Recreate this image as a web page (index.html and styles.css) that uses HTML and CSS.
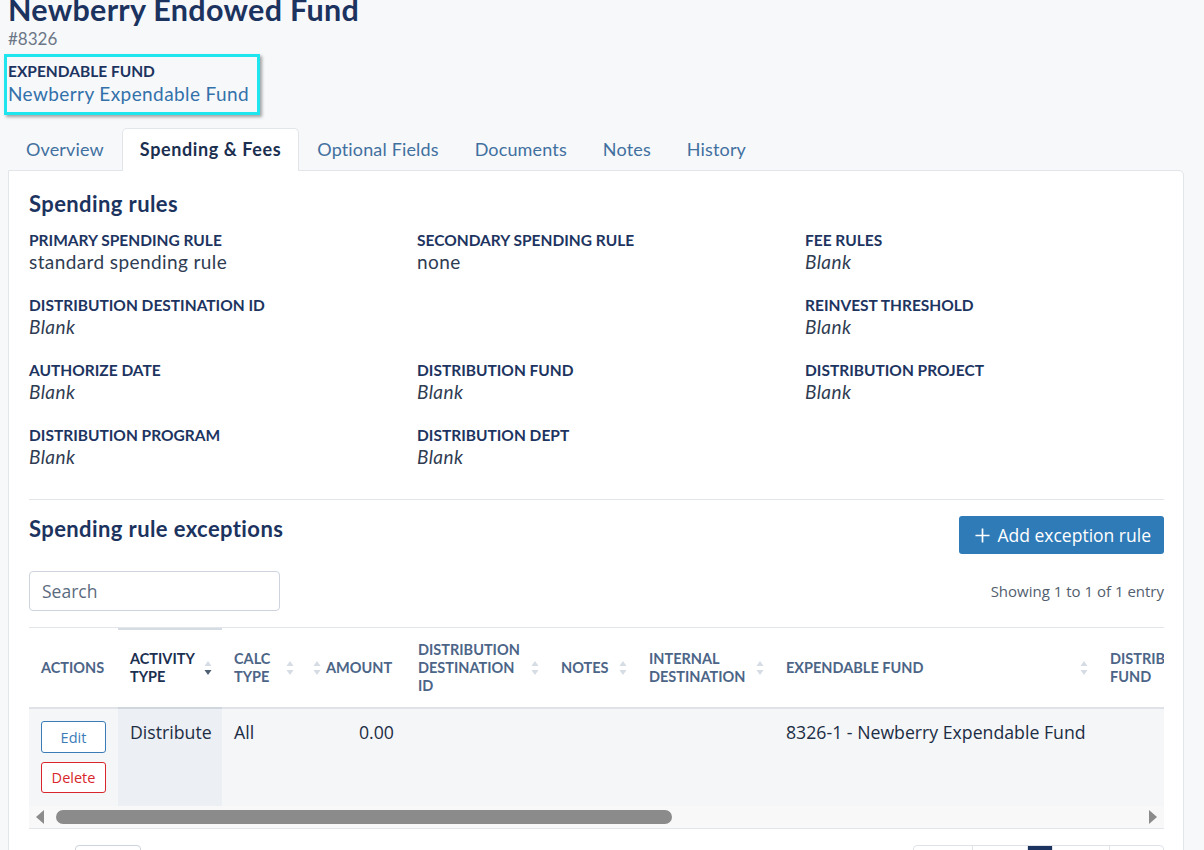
FILE: index.html
```html
<!DOCTYPE html>
<html lang="en">
<head>
<meta charset="utf-8">
<title>Newberry Endowed Fund</title>
<link rel="stylesheet" href="styles.css">
</head>
<body>
<div class="page">
  <header class="fund-head">
    <h1 class="fund-title">Newberry Endowed Fund</h1>
    <div class="fund-number">#8326</div>
    <div class="linked-fund">
      <div class="linked-label">EXPENDABLE FUND</div>
      <a class="linked-link" href="#">Newberry Expendable Fund</a>
    </div>
  </header>

  <nav class="tabs">
    <a class="tab" href="#">Overview</a>
    <a class="tab tab-active" href="#">Spending &amp; Fees</a>
    <a class="tab" href="#">Optional Fields</a>
    <a class="tab" href="#">Documents</a>
    <a class="tab" href="#">Notes</a>
    <a class="tab" href="#">History</a>
  </nav>

  <section class="card">
    <h2 class="section-title">Spending rules</h2>
    <div class="field-grid">
      <div class="field"><div class="field-label">PRIMARY SPENDING RULE</div><div class="field-value">standard spending rule</div></div>
      <div class="field"><div class="field-label">SECONDARY SPENDING RULE</div><div class="field-value">none</div></div>
      <div class="field"><div class="field-label">FEE RULES</div><div class="field-value blank">Blank</div></div>

      <div class="field"><div class="field-label">DISTRIBUTION DESTINATION ID</div><div class="field-value blank">Blank</div></div>
      <div class="field"></div>
      <div class="field"><div class="field-label">REINVEST THRESHOLD</div><div class="field-value blank">Blank</div></div>

      <div class="field"><div class="field-label">AUTHORIZE DATE</div><div class="field-value blank">Blank</div></div>
      <div class="field"><div class="field-label">DISTRIBUTION FUND</div><div class="field-value blank">Blank</div></div>
      <div class="field"><div class="field-label">DISTRIBUTION PROJECT</div><div class="field-value blank">Blank</div></div>

      <div class="field"><div class="field-label">DISTRIBUTION PROGRAM</div><div class="field-value blank">Blank</div></div>
      <div class="field"><div class="field-label">DISTRIBUTION DEPT</div><div class="field-value blank">Blank</div></div>
      <div class="field"></div>
    </div>

    <hr class="divider">

    <div class="exceptions-head">
      <h2 class="section-title">Spending rule exceptions</h2>
      <button class="btn-primary" type="button"><svg class="plus" viewBox="0 0 16 16"><path d="M8 0.5 V15.5 M0.5 8 H15.5"/></svg>Add exception rule</button>
    </div>

    <div class="table-tools">
      <input class="search" type="text" placeholder="Search">
      <div class="info">Showing 1 to 1 of 1 entry</div>
    </div>

    <div class="table-frame">
      <div class="table-clip">
        <table class="grid">
          <colgroup>
            <col class="w-actions"><col class="w-activity"><col class="w-calc"><col class="w-amount">
            <col class="w-dest"><col class="w-notes"><col class="w-internal"><col class="w-expfund">
            <col class="w-distfund"><col class="w-extra"><col class="w-extra">
          </colgroup>
          <thead>
            <tr>
              <th class="plain">ACTIONS</th>
              <th class="sorted"><div class="th-in"><span>ACTIVITY<br>TYPE</span><svg class="sort" viewBox="0 0 8 16"><path class="up" d="M4 1 L7.5 6 H0.5 Z"/><path class="down on" d="M4 15 L7.5 10 H0.5 Z"/></svg></div></th>
              <th><div class="th-in"><span>CALC<br>TYPE</span><svg class="sort" viewBox="0 0 8 16"><path class="up" d="M4 1 L7.5 6 H0.5 Z"/><path class="down" d="M4 15 L7.5 10 H0.5 Z"/></svg></div></th>
              <th class="num"><div class="th-in"><svg class="sort" viewBox="0 0 8 16"><path class="up" d="M4 1 L7.5 6 H0.5 Z"/><path class="down" d="M4 15 L7.5 10 H0.5 Z"/></svg><span>AMOUNT</span></div></th>
              <th><div class="th-in"><span>DISTRIBUTION<br>DESTINATION<br>ID</span><svg class="sort" viewBox="0 0 8 16"><path class="up" d="M4 1 L7.5 6 H0.5 Z"/><path class="down" d="M4 15 L7.5 10 H0.5 Z"/></svg></div></th>
              <th><div class="th-in"><span>NOTES</span><svg class="sort" viewBox="0 0 8 16"><path class="up" d="M4 1 L7.5 6 H0.5 Z"/><path class="down" d="M4 15 L7.5 10 H0.5 Z"/></svg></div></th>
              <th><div class="th-in"><span>INTERNAL<br>DESTINATION</span><svg class="sort" viewBox="0 0 8 16"><path class="up" d="M4 1 L7.5 6 H0.5 Z"/><path class="down" d="M4 15 L7.5 10 H0.5 Z"/></svg></div></th>
              <th><div class="th-in"><span>EXPENDABLE FUND</span><svg class="sort" viewBox="0 0 8 16"><path class="up" d="M4 1 L7.5 6 H0.5 Z"/><path class="down" d="M4 15 L7.5 10 H0.5 Z"/></svg></div></th>
              <th><div class="th-in"><span>DISTRIBUTION<br>FUND</span><svg class="sort" viewBox="0 0 8 16"><path class="up" d="M4 1 L7.5 6 H0.5 Z"/><path class="down" d="M4 15 L7.5 10 H0.5 Z"/></svg></div></th>
              <th><div class="th-in"><span>DISTRIBUTION<br>PROJECT</span></div></th>
              <th><div class="th-in"><span>CREATED</span></div></th>
            </tr>
          </thead>
          <tbody>
            <tr>
              <td class="actions">
                <button class="btn-outline btn-edit" type="button">Edit</button>
                <button class="btn-outline btn-delete" type="button">Delete</button>
              </td>
              <td class="sorted">Distribute</td>
              <td>All</td>
              <td class="num">0.00</td>
              <td></td>
              <td></td>
              <td></td>
              <td>8326-1 - Newberry Expendable Fund</td>
              <td></td>
              <td></td>
              <td></td>
            </tr>
          </tbody>
        </table>
      </div>
      <div class="hscroll">
        <svg class="arrow" viewBox="0 0 10 14"><path d="M9 0 V14 L1 7 Z"/></svg>
        <div class="track"><div class="thumb"></div></div>
        <svg class="arrow" viewBox="0 0 10 14"><path d="M1 0 V14 L9 7 Z"/></svg>
      </div>
    </div>

    <div class="table-foot">
      <label class="length">Show <span class="select">10</span> entries</label>
      <div class="pager">
        <a class="page-btn p-first" href="#">First</a>
        <a class="page-btn p-prev" href="#">Previous</a>
        <a class="page-btn p-cur" href="#">1</a>
        <a class="page-btn p-next" href="#">Next</a>
        <a class="page-btn p-last" href="#">Last</a>
      </div>
    </div>
  </section>
</div>
</body>
</html>
```

FILE: styles.css
```css
* { box-sizing: border-box; }

html, body {
  margin: 0;
  background: #f7f8fa;
  overflow: hidden;
}

body {
  font-family: Lato, "Noto Sans", sans-serif;
  color: #1d3461;
}

.page {
  padding: 0 20px 0 8px;
}

/* ---------- fund header ---------- */
.fund-head {
  display: flex;
  flex-direction: column;
  align-items: flex-start;
}

.fund-title {
  margin: -8px 0 0;
  font-size: 30.5px;
  line-height: 35px;
  letter-spacing: 0.3px;
  font-weight: 700;
  color: #1b335e;
}

.fund-number {
  margin-top: 1px;
  font-size: 17px;
  line-height: 21px;
  color: #6b7686;
}

.linked-fund {
  margin: 5px 0 0 -4px;
  padding: 5px 8px 6px 1px;
  border: 3px solid #1fe6ee;
  box-shadow: 2px 2px 3px rgba(0, 0, 0, 0.35);
  display: flex;
  flex-direction: column;
}

.linked-label {
  font-size: 15.5px;
  line-height: 19px;
  font-weight: 700;
  color: #1d3461;
}

.linked-link {
  margin-top: 1px;
  font-size: 19px;
  line-height: 24px;
  letter-spacing: 0.4px;
  color: #3371aa;
  text-decoration: none;
}

/* ---------- tabs ---------- */
.tabs {
  display: flex;
  margin-top: 13px;
  position: relative;
  z-index: 1;
}

.tab {
  display: block;
  padding: 0 17px;
  height: 43px;
  line-height: 41px;
  font-size: 18px;
  letter-spacing: 0.15px;
  color: #41709f;
  text-decoration: none;
  border: 1px solid transparent;
  border-bottom: 0;
  border-radius: 5px 5px 0 0;
}

.tab-active {
  background: #fff;
  border-color: #e2e6eb;
  color: #1b2f50;
  font-weight: 700;
  letter-spacing: 0.6px;
}

/* ---------- card ---------- */
.card {
  background: #fff;
  border: 1px solid #e2e6eb;
  border-radius: 0 5px 0 0;
  margin-top: -1px;
  padding: 19px 19px 0 20px;
}

.section-title {
  margin: 0;
  font-size: 22px;
  line-height: 28px;
  letter-spacing: 0.4px;
  font-weight: 700;
  color: #1b335e;
}

.field-grid {
  display: grid;
  grid-template-columns: 388px 388px 1fr;
  grid-auto-rows: 65px;
  margin-top: 12px;
}

.field-label {
  font-size: 15.5px;
  line-height: 20px;
  font-weight: 700;
  color: #1d3461;
}

.field-value {
  margin-top: 0;
  font-size: 19px;
  line-height: 24px;
  letter-spacing: 0.4px;
  color: #2f3c52;
}

.field-value.blank {
  font-style: italic;
}

.divider {
  border: 0;
  border-top: 1px solid #e2e5ea;
  margin: 9px 0 0;
}

.exceptions-head {
  display: flex;
  justify-content: space-between;
  align-items: flex-start;
  margin-top: 16px;
}

.exceptions-head .section-title {
  margin-top: -1px;
}

.btn-primary {
  height: 38px;
  padding: 0 13px 0 16px;
  background: #2f7bb8;
  border: 0;
  border-radius: 3px;
  color: #fff;
  font-family: "Open Sans", "Noto Sans", sans-serif;
  font-size: 17.5px;
  display: flex;
  align-items: center;
  gap: 7px;
}

.btn-primary .plus {
  width: 15px;
  height: 15px;
  flex: none;
}

.btn-primary .plus path {
  stroke: #fff;
  stroke-width: 1.8;
  fill: none;
}

.table-tools {
  display: flex;
  justify-content: space-between;
  align-items: center;
  margin-top: 17px;
}

.search {
  width: 251px;
  height: 40px;
  border: 1px solid #cdd4dd;
  border-radius: 4px;
  padding: 0 12px;
  font-family: "Open Sans", "Noto Sans", sans-serif;
  font-size: 17.5px;
  color: #2f3c52;
  background: #fff;
}

.search::placeholder {
  color: #5a6a7e;
}

.info {
  font-family: "Open Sans", "Noto Sans", sans-serif;
  font-size: 15px;
  color: #525e6e;
}

/* ---------- table ---------- */
.table-frame {
  margin-top: 16px;
  border-top: 1px solid #e2e5ea;
  border-bottom: 1px solid #e2e5ea;
}

.table-clip {
  overflow: hidden;
}

.grid {
  table-layout: fixed;
  border-collapse: collapse;
  width: 1659px;
}

.w-actions { width: 89px; }
.w-activity { width: 104px; }
.w-calc { width: 82px; }
.w-amount { width: 102px; }
.w-dest { width: 143px; }
.w-notes { width: 88px; }
.w-internal { width: 137px; }
.w-expfund { width: 324px; }
.w-distfund { width: 150px; }
.w-extra { width: 220px; }

.grid th {
  height: 80px;
  padding: 0 10px 0 12px;
  text-align: left;
  vertical-align: middle;
  font-size: 14.5px;
  line-height: 18px;
  font-weight: 700;
  color: #4c6587;
  border-bottom: 2px solid #dfe3e8;
  white-space: nowrap;
}

.grid th.sorted {
  color: #1b2f50;
  border-bottom-color: #cfd6de;
  box-shadow: inset 0 2px 0 #d6dce3;
}

.th-in {
  display: flex;
  align-items: center;
  justify-content: space-between;
  gap: 6px;
}

.grid th.num .th-in {
  justify-content: flex-start;
  gap: 5px;
  margin-left: -3px;
}

.sort {
  width: 8px;
  height: 16px;
  flex: none;
}

.sort path { fill: #d6dce4; }
.sort path.on { fill: #4d5d72; }

.grid td {
  background: #f4f6f8;
  padding: 11px 12px 0;
  height: 98px;
  vertical-align: top;
  font-family: "Open Sans", "Noto Sans", sans-serif;
  font-size: 17.7px;
  line-height: 24px;
  color: #1c2d44;
  white-space: nowrap;
}

.grid td.sorted { background: #eceff3; }
.grid td.num { text-align: right; }

.grid td.actions {
  padding: 12px 0 0 12px;
}

.btn-outline {
  display: block;
  width: 65px;
  height: 32px;
  background: #fff;
  border-radius: 3px;
  font-family: "Open Sans", "Noto Sans", sans-serif;
  font-size: 14.5px;
  padding: 0;
}

.btn-edit {
  border: 1px solid #3b7cb7;
  color: #3b7cb7;
}

.btn-delete {
  margin-top: 9px;
  height: 31px;
  border: 1px solid #d8262b;
  color: #d8262b;
}

.hscroll {
  display: flex;
  align-items: center;
  height: 22px;
  background: #f8f8f8;
  padding: 0 6px;
}

.hscroll .arrow {
  width: 10px;
  height: 14px;
  flex: none;
}

.hscroll .arrow path { fill: #8b8b8b; }

.track {
  flex: 1;
  padding: 0 3px 0 11px;
}

.thumb {
  width: 616px;
  height: 14px;
  border-radius: 7px;
  background: #8b8b8b;
}

/* ---------- table footer ---------- */
.table-foot {
  display: flex;
  justify-content: space-between;
  align-items: flex-start;
  margin-top: 16px;
  height: 60px;
}

.length {
  display: flex;
  align-items: center;
  gap: 8px;
  font-family: "Open Sans", "Noto Sans", sans-serif;
  font-size: 15px;
  color: #525e6e;
}

.length .select {
  display: block;
  width: 66px;
  height: 34px;
  line-height: 32px;
  padding-left: 10px;
  border: 1px solid #cdd4dd;
  border-radius: 4px;
  background: #fff;
}

.pager {
  display: flex;
  border: 1px solid #dfe3e8;
  border-radius: 4px;
}

.page-btn {
  display: block;
  height: 36px;
  line-height: 34px;
  padding: 0 9px;
  font-family: "Open Sans", "Noto Sans", sans-serif;
  font-size: 14px;
  color: #3371aa;
  text-decoration: none;
  border-left: 1px solid #dfe3e8;
}

.page-btn:first-child { border-left: 0; }

.p-first { width: 58px; }
.p-prev { width: 55px; }
.p-cur { width: 25px; background: #1b335e; color: #fff; padding: 0 8px; }
.p-next { width: 57px; }
.p-last { width: 54px; }
```
